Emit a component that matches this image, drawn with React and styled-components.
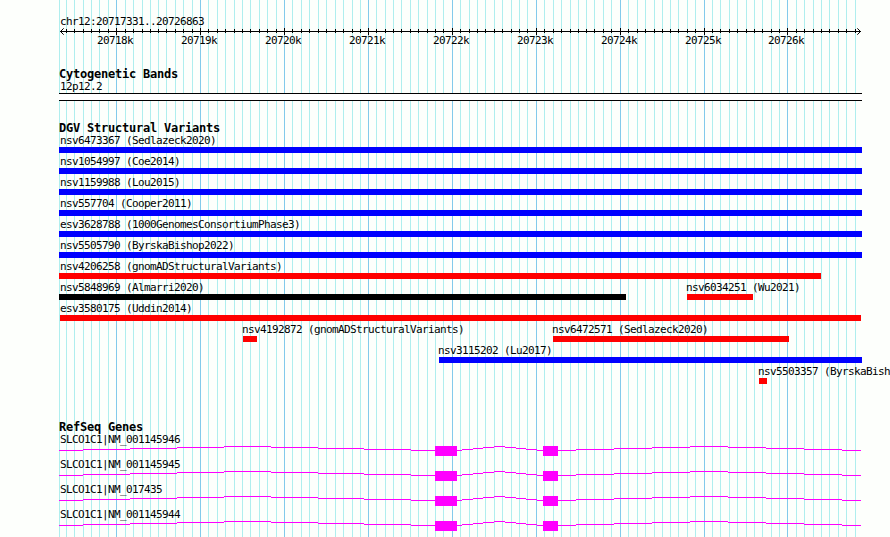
import React from "react";
import styled, { createGlobalStyle } from "styled-components";

const Global = createGlobalStyle`
  body { margin: 0; background: #fdfffc; }
  *, *::before, *::after { box-sizing: border-box; }
`;

const TICKS = [
  66, 74, 83, 91, 99, 108, 116, 125, 133, 142, 150, 158, 166, 175, 183, 192,
  200, 208, 217, 225, 234, 242, 250, 259, 267, 276, 284, 292, 301, 309, 318,
  326, 335, 343, 352, 360, 368, 376, 385, 393, 401, 410, 418, 427, 435, 443,
  452, 460, 469, 477, 485, 494, 502, 511, 519, 527, 536, 544, 553, 561, 570,
  578, 586, 594, 603, 611, 620, 628, 637, 645, 654, 662, 670, 678, 687, 695,
  704, 712, 720, 729, 737, 746, 754, 762, 771, 779, 787, 796, 804, 813, 821,
  829, 838, 846, 855,
];
const MAJORS = [116, 200, 284, 368, 452, 536, 620, 704, 787];

const Browser = styled.main`
  position: relative;
  width: 890px;
  height: 537px;
  overflow: hidden;
  background: #fdfffc;
  color: #000;
  font-family: "DejaVu Sans Mono", monospace;
`;

const GridLines = styled.svg`
  position: absolute;
  inset: 0;
  display: block;
`;

const Tracks = styled.div`
  position: relative;
  display: flex;
  flex-direction: column;
  padding: 15px 0 0 59px;
`;

const Label = styled.div`
  height: 13px;
  margin-left: ${(p) => p.$inset || 0}px;
  font-size: 11px;
  line-height: 13px;
  letter-spacing: -0.622px;
  white-space: pre;
`;

const Title = styled.h2`
  height: 12px;
  margin: 0;
  font-size: 12px;
  line-height: 12px;
  font-weight: 700;
  letter-spacing: -0.224px;
  white-space: pre;
`;

const Drawing = styled.svg`
  display: block;
  width: 803px;
  height: ${(p) => p.$height}px;
  shape-rendering: ${(p) => (p.$smooth ? "auto" : "crispEdges")};
`;

const Ruler = styled.section`
  height: 53px;
`;

const ScaleLabels = styled.div`
  display: grid;
  grid-template-columns: repeat(7, 84px) 83px 84px;
  margin: -1px 0 0 38px;
`;

const Cytobands = styled.section`
  height: 54px;
`;

const Band = styled.div`
  width: 803px;
  height: 8px;
  border: solid #000;
  border-width: 1px 0;
  background: #fff;
`;

const Variants = styled.section`
  height: 299px;
`;

const VariantRow = styled.div`
  display: flex;
  height: 21px;
`;

const Variant = styled.div`
  flex: none;
  width: ${(p) => p.$width}px;
  margin-left: ${(p) => p.$gap || 0}px;
`;

const Bar = styled.div`
  height: 6px;
  margin-left: ${(p) => p.$inset || 0}px;
  background: ${(p) => p.$color};
`;

const Genes = styled.section`
  height: 120px;
`;

const GeneRow = styled.div`
  height: 25px;
`;

const BLUE = "#0000ff";
const RED = "#ff0000";

const rows = [
  [{ name: "nsv6473367 (Sedlazeck2020)", w: 803, c: BLUE, pad: 1 }],
  [{ name: "nsv1054997 (Coe2014)", w: 803, c: BLUE, pad: 1 }],
  [{ name: "nsv1159988 (Lou2015)", w: 803, c: BLUE, pad: 1 }],
  [{ name: "nsv557704 (Cooper2011)", w: 803, c: BLUE, pad: 1 }],
  [{ name: "esv3628788 (1000GenomesConsortiumPhase3)", w: 803, c: BLUE, pad: 1 }],
  [{ name: "nsv5505790 (ByrskaBishop2022)", w: 803, c: BLUE, pad: 1 }],
  [{ name: "nsv4206258 (gnomADStructuralVariants)", w: 762, c: RED, pad: 1 }],
  [
    { name: "nsv5848969 (Almarri2020)", w: 567, c: "#000", pad: 1 },
    { name: "nsv6034251 (Wu2021)", w: 66, c: RED, gap: 61, pad: -1 },
  ],
  [{ name: "esv3580175 (Uddin2014)", w: 802, c: RED, pad: 1, inset: 1 }],
  [
    { name: "nsv4192872 (gnomADStructuralVariants)", w: 14, c: RED, gap: 184, pad: -1 },
    { name: "nsv6472571 (Sedlazeck2020)", w: 236, c: RED, gap: 296, pad: -1 },
  ],
  [{ name: "nsv3115202 (Lu2017)", w: 423, c: BLUE, gap: 380, pad: -1 }],
  [{ name: "nsv5503357 (ByrskaBish", w: 8, c: RED, gap: 700, pad: -1 }],
];

const genes = ["NM_001145946", "NM_001145945", "NM_017435", "NM_001145944"];

// Each intron rises four pixels to its midpoint and falls back again.
const INTRONS = [
  [59, 83, 130, 177, 224, 271, 318, 364, 411, 435],
  [457, 462, 473, 483, 494, 505, 516, 526, 537, 543],
  [558, 576, 614, 652, 690, 728, 766, 804, 842, 861],
];

function Gene({ id }) {
  return (
    <GeneRow>
      <Label $inset={1}>{"SLCO1C1|" + id}</Label>
      <Drawing $height={12} viewBox="59 0 803 12" fill="#ff00ff">
        {INTRONS.map((stops) =>
          stops.slice(0, -1).map((x, i) => (
            <rect key={x} x={x} y={Math.abs(i - 4)} width={stops[i + 1] - x} height="1" />
          ))
        )}
        <rect x="435" y="0" width="22" height="10" />
        <rect x="543" y="0" width="15" height="10" />
      </Drawing>
    </GeneRow>
  );
}

export default function App() {
  return (
    <>
      <Global />
      <Browser>
        <GridLines width="890" height="537" shapeRendering="crispEdges">
          {[59, ...TICKS].map((x) => (
            <rect key={x} x={x} y="0" width="1" height="537" fill={MAJORS.includes(x) ? "#82caeb" : "#afeeee"} />
          ))}
        </GridLines>
        <Tracks>
          <Ruler>
            <Label $inset={1}>chr12:20717331..20726863</Label>
            <Drawing $height={7} $smooth viewBox="59 28 803 7">
              <g shapeRendering="crispEdges">
                <rect x="60" y="31" width="801" height="1" />
                {TICKS.map((x) =>
                  MAJORS.includes(x) ? (
                    <rect key={x} x={x} y="28" width="1" height="7" />
                  ) : (
                    <rect key={x} x={x} y="29" width="1" height="4" />
                  )
                )}
              </g>
              <path d="M63.7 28.3 60.5 31.5 63.7 34.7M857.3 28.3 860.5 31.5 857.3 34.7" fill="none" stroke="#000" />
            </Drawing>
            <ScaleLabels>
              {MAJORS.map((x, i) => (
                <Label key={x}>{20718 + i + "k"}</Label>
              ))}
            </ScaleLabels>
          </Ruler>
          <Cytobands>
            <Title>Cytogenetic Bands</Title>
            <Label $inset={1}>12p12.2</Label>
            <Band />
          </Cytobands>
          <Variants>
            <Title>DGV Structural Variants</Title>
            {rows.map((row) => (
              <VariantRow key={row[0].name}>
                {row.map((v) => (
                  <Variant key={v.name} $width={v.w} $gap={v.gap}>
                    <Label $inset={v.pad}>{v.name}</Label>
                    <Bar $color={v.c} $inset={v.inset} />
                  </Variant>
                ))}
              </VariantRow>
            ))}
          </Variants>
          <Genes>
            <Title>RefSeq Genes</Title>
            {genes.map((id) => (
              <Gene key={id} id={id} />
            ))}
          </Genes>
        </Tracks>
      </Browser>
    </>
  );
}
